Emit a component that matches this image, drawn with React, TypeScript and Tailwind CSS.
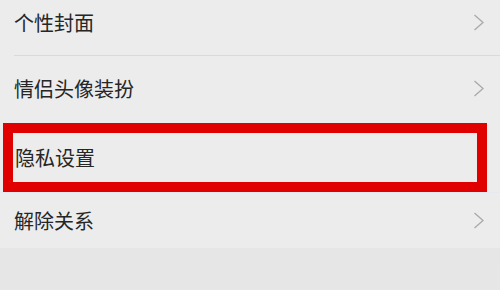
const font = { fontFamily: '"Noto Sans CJK SC", "Noto Sans", sans-serif' };

function Chevron() {
  return (
    <svg width="12" height="17" viewBox="0 0 12 17" className="shrink-0">
      <path d="M1.5 1 L10 8.5 L1.5 16" fill="none" stroke="#a9a9a9" strokeWidth="1.3" />
    </svg>
  );
}

export default function App() {
  return (
    <div
      className="h-[290px] w-[500px] overflow-hidden bg-[#ececec] text-[20px] text-[#262626]"
      style={font}
    >
      <div className="ml-[14px] flex h-[56px] items-center border-b border-[#dadada] pb-[10px] pr-[15px]">
        <span className="flex-1">个性封面</span>
        <Chevron />
      </div>
      <div className="flex h-[67px] items-center pb-[2px] pl-[14px] pr-[15px]">
        <span className="flex-1">情侣头像装扮</span>
        <Chevron />
      </div>
      <div className="ml-[3px] mr-[13px] flex h-[69px] items-center border-[10px] border-[#e00000] pl-[2px]">
        <span className="flex-1">隐私设置</span>
      </div>
      <div className="flex h-[56px] items-center border-t border-[#e6e9f0] pl-[14px] pr-[15px]">
        <span className="flex-1">解除关系</span>
        <Chevron />
      </div>
      <div className="h-full bg-gradient-to-b from-[#e6e6e6] to-[#eaeaea]" />
    </div>
  );
}
